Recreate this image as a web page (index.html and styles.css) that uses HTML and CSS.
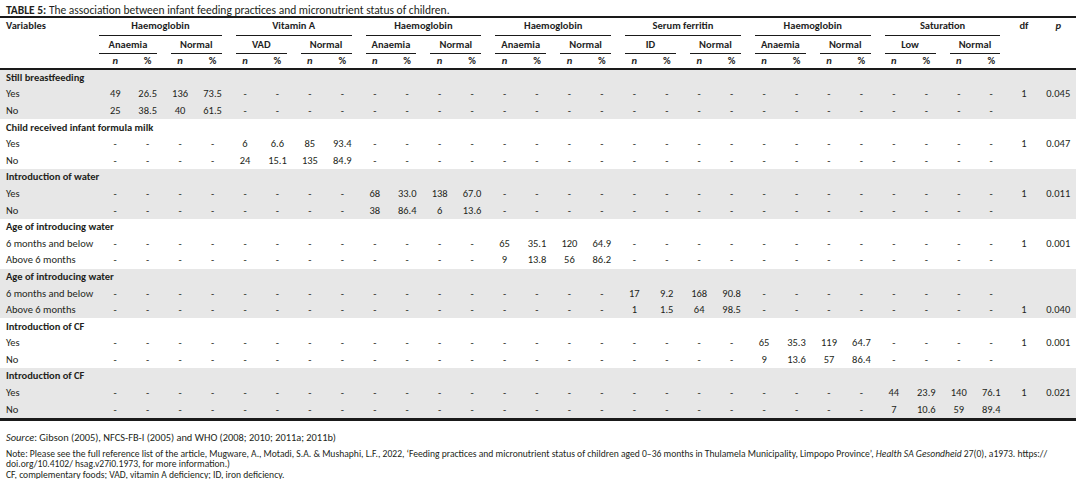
FILE: index.html
```html
<!DOCTYPE html>
<html lang="en">
<head>
<meta charset="utf-8">
<title>Table 5</title>
<link rel="stylesheet" href="styles.css">
</head>
<body>
<div class="caption"><b>TABLE 5:</b> The association between infant feeding practices and micronutrient status of children.</div>
<table class="tbl">
<colgroup>
<col class="c-var">
<col class="c-d"><col class="c-d"><col class="c-d"><col class="c-d"><col class="c-d"><col class="c-d"><col class="c-d">
<col class="c-d"><col class="c-d"><col class="c-d"><col class="c-d"><col class="c-d"><col class="c-d"><col class="c-d">
<col class="c-d"><col class="c-d"><col class="c-d"><col class="c-d"><col class="c-d"><col class="c-d"><col class="c-d">
<col class="c-d"><col class="c-d"><col class="c-d"><col class="c-d"><col class="c-d"><col class="c-d"><col class="c-d">
<col class="c-df"><col class="c-p">
</colgroup>
<thead>
<tr class="h1">
<th rowspan="3" class="h-var">Variables</th>
<th colspan="4"><span class="grp first">Haemoglobin</span></th>
<th colspan="4"><span class="grp">Vitamin A</span></th>
<th colspan="4"><span class="grp">Haemoglobin</span></th>
<th colspan="4"><span class="grp">Haemoglobin</span></th>
<th colspan="4"><span class="grp">Serum ferritin</span></th>
<th colspan="4"><span class="grp">Haemoglobin</span></th>
<th colspan="4"><span class="grp">Saturation</span></th>
<th rowspan="3" class="h-top">df</th>
<th rowspan="3" class="h-top"><i>p</i></th>
</tr>
<tr class="h2">
<th colspan="2"><span class="grp first">Anaemia</span></th><th colspan="2"><span class="grp">Normal</span></th>
<th colspan="2"><span class="grp">VAD</span></th><th colspan="2"><span class="grp">Normal</span></th>
<th colspan="2"><span class="grp">Anaemia</span></th><th colspan="2"><span class="grp">Normal</span></th>
<th colspan="2"><span class="grp">Anaemia</span></th><th colspan="2"><span class="grp">Normal</span></th>
<th colspan="2"><span class="grp">ID</span></th><th colspan="2"><span class="grp">Normal</span></th>
<th colspan="2"><span class="grp">Anaemia</span></th><th colspan="2"><span class="grp">Normal</span></th>
<th colspan="2"><span class="grp">Low</span></th><th colspan="2"><span class="grp">Normal</span></th>
</tr>
<tr class="h3">
<th><i>n</i></th><th>%</th><th><i>n</i></th><th>%</th><th><i>n</i></th><th>%</th><th><i>n</i></th><th>%</th>
<th><i>n</i></th><th>%</th><th><i>n</i></th><th>%</th><th><i>n</i></th><th>%</th><th><i>n</i></th><th>%</th>
<th><i>n</i></th><th>%</th><th><i>n</i></th><th>%</th><th><i>n</i></th><th>%</th><th><i>n</i></th><th>%</th>
<th><i>n</i></th><th>%</th><th><i>n</i></th><th>%</th>
</tr>
</thead>

<tbody class="sec shade">
<tr><td colspan="31" class="sec-title">Still breastfeeding</td></tr>
<tr><td class="lbl">Yes</td>
<td>49</td><td>26.5</td><td>136</td><td>73.5</td>
<td>-</td><td>-</td><td>-</td><td>-</td><td>-</td><td>-</td><td>-</td><td>-</td>
<td>-</td><td>-</td><td>-</td><td>-</td><td>-</td><td>-</td><td>-</td><td>-</td>
<td>-</td><td>-</td><td>-</td><td>-</td><td>-</td><td>-</td><td>-</td><td>-</td>
<td>1</td><td>0.045</td></tr>
<tr><td class="lbl">No</td>
<td>25</td><td>38.5</td><td>40</td><td>61.5</td>
<td>-</td><td>-</td><td>-</td><td>-</td><td>-</td><td>-</td><td>-</td><td>-</td>
<td>-</td><td>-</td><td>-</td><td>-</td><td>-</td><td>-</td><td>-</td><td>-</td>
<td>-</td><td>-</td><td>-</td><td>-</td><td>-</td><td>-</td><td>-</td><td>-</td>
<td></td><td></td></tr>
</tbody>

<tbody class="sec">
<tr><td colspan="31" class="sec-title">Child received infant formula milk</td></tr>
<tr><td class="lbl">Yes</td>
<td>-</td><td>-</td><td>-</td><td>-</td>
<td>6</td><td>6.6</td><td>85</td><td>93.4</td>
<td>-</td><td>-</td><td>-</td><td>-</td><td>-</td><td>-</td><td>-</td><td>-</td>
<td>-</td><td>-</td><td>-</td><td>-</td><td>-</td><td>-</td><td>-</td><td>-</td>
<td>-</td><td>-</td><td>-</td><td>-</td>
<td>1</td><td>0.047</td></tr>
<tr><td class="lbl">No</td>
<td>-</td><td>-</td><td>-</td><td>-</td>
<td>24</td><td>15.1</td><td>135</td><td>84.9</td>
<td>-</td><td>-</td><td>-</td><td>-</td><td>-</td><td>-</td><td>-</td><td>-</td>
<td>-</td><td>-</td><td>-</td><td>-</td><td>-</td><td>-</td><td>-</td><td>-</td>
<td>-</td><td>-</td><td>-</td><td>-</td>
<td></td><td></td></tr>
</tbody>

<tbody class="sec shade">
<tr><td colspan="31" class="sec-title">Introduction of water</td></tr>
<tr><td class="lbl">Yes</td>
<td>-</td><td>-</td><td>-</td><td>-</td><td>-</td><td>-</td><td>-</td><td>-</td>
<td>68</td><td>33.0</td><td>138</td><td>67.0</td>
<td>-</td><td>-</td><td>-</td><td>-</td><td>-</td><td>-</td><td>-</td><td>-</td>
<td>-</td><td>-</td><td>-</td><td>-</td><td>-</td><td>-</td><td>-</td><td>-</td>
<td>1</td><td>0.011</td></tr>
<tr><td class="lbl">No</td>
<td>-</td><td>-</td><td>-</td><td>-</td><td>-</td><td>-</td><td>-</td><td>-</td>
<td>38</td><td>86.4</td><td>6</td><td>13.6</td>
<td>-</td><td>-</td><td>-</td><td>-</td><td>-</td><td>-</td><td>-</td><td>-</td>
<td>-</td><td>-</td><td>-</td><td>-</td><td>-</td><td>-</td><td>-</td><td>-</td>
<td></td><td></td></tr>
</tbody>

<tbody class="sec">
<tr><td colspan="31" class="sec-title">Age of introducing water</td></tr>
<tr><td class="lbl">6 months and below</td>
<td>-</td><td>-</td><td>-</td><td>-</td><td>-</td><td>-</td><td>-</td><td>-</td>
<td>-</td><td>-</td><td>-</td><td>-</td>
<td>65</td><td>35.1</td><td>120</td><td>64.9</td>
<td>-</td><td>-</td><td>-</td><td>-</td><td>-</td><td>-</td><td>-</td><td>-</td>
<td>-</td><td>-</td><td>-</td><td>-</td>
<td>1</td><td>0.001</td></tr>
<tr><td class="lbl">Above 6 months</td>
<td>-</td><td>-</td><td>-</td><td>-</td><td>-</td><td>-</td><td>-</td><td>-</td>
<td>-</td><td>-</td><td>-</td><td>-</td>
<td>9</td><td>13.8</td><td>56</td><td>86.2</td>
<td>-</td><td>-</td><td>-</td><td>-</td><td>-</td><td>-</td><td>-</td><td>-</td>
<td>-</td><td>-</td><td>-</td><td>-</td>
<td></td><td></td></tr>
</tbody>

<tbody class="sec shade">
<tr><td colspan="31" class="sec-title">Age of introducing water</td></tr>
<tr><td class="lbl">6 months and below</td>
<td>-</td><td>-</td><td>-</td><td>-</td><td>-</td><td>-</td><td>-</td><td>-</td>
<td>-</td><td>-</td><td>-</td><td>-</td><td>-</td><td>-</td><td>-</td><td>-</td>
<td>17</td><td>9.2</td><td>168</td><td>90.8</td>
<td>-</td><td>-</td><td>-</td><td>-</td><td>-</td><td>-</td><td>-</td><td>-</td>
<td></td><td></td></tr>
<tr><td class="lbl">Above 6 months</td>
<td>-</td><td>-</td><td>-</td><td>-</td><td>-</td><td>-</td><td>-</td><td>-</td>
<td>-</td><td>-</td><td>-</td><td>-</td><td>-</td><td>-</td><td>-</td><td>-</td>
<td>1</td><td>1.5</td><td>64</td><td>98.5</td>
<td>-</td><td>-</td><td>-</td><td>-</td><td>-</td><td>-</td><td>-</td><td>-</td>
<td>1</td><td>0.040</td></tr>
</tbody>

<tbody class="sec">
<tr><td colspan="31" class="sec-title">Introduction of CF</td></tr>
<tr><td class="lbl">Yes</td>
<td>-</td><td>-</td><td>-</td><td>-</td><td>-</td><td>-</td><td>-</td><td>-</td>
<td>-</td><td>-</td><td>-</td><td>-</td><td>-</td><td>-</td><td>-</td><td>-</td>
<td>-</td><td>-</td><td>-</td><td>-</td>
<td>65</td><td>35.3</td><td>119</td><td>64.7</td>
<td>-</td><td>-</td><td>-</td><td>-</td>
<td>1</td><td>0.001</td></tr>
<tr><td class="lbl">No</td>
<td>-</td><td>-</td><td>-</td><td>-</td><td>-</td><td>-</td><td>-</td><td>-</td>
<td>-</td><td>-</td><td>-</td><td>-</td><td>-</td><td>-</td><td>-</td><td>-</td>
<td>-</td><td>-</td><td>-</td><td>-</td>
<td>9</td><td>13.6</td><td>57</td><td>86.4</td>
<td>-</td><td>-</td><td>-</td><td>-</td>
<td></td><td></td></tr>
</tbody>

<tbody class="sec shade">
<tr><td colspan="31" class="sec-title">Introduction of CF</td></tr>
<tr><td class="lbl">Yes</td>
<td>-</td><td>-</td><td>-</td><td>-</td><td>-</td><td>-</td><td>-</td><td>-</td>
<td>-</td><td>-</td><td>-</td><td>-</td><td>-</td><td>-</td><td>-</td><td>-</td>
<td>-</td><td>-</td><td>-</td><td>-</td><td>-</td><td>-</td><td>-</td><td>-</td>
<td>44</td><td>23.9</td><td>140</td><td>76.1</td>
<td>1</td><td>0.021</td></tr>
<tr><td class="lbl">No</td>
<td>-</td><td>-</td><td>-</td><td>-</td><td>-</td><td>-</td><td>-</td><td>-</td>
<td>-</td><td>-</td><td>-</td><td>-</td><td>-</td><td>-</td><td>-</td><td>-</td>
<td>-</td><td>-</td><td>-</td><td>-</td><td>-</td><td>-</td><td>-</td><td>-</td>
<td>7</td><td>10.6</td><td>59</td><td>89.4</td>
<td></td><td></td></tr>
</tbody>
</table>

<div class="notes">
<p class="src"><i>Source</i>: Gibson (2005), NFCS-FB-I (2005) and WHO (2008; 2010; 2011a; 2011b)</p>
<p class="note">Note: Please see the full reference list of the article, Mugware, A., Motadi, S.A. &amp; Mushaphi, L.F., 2022, ‘Feeding practices and micronutrient status of children aged 0–36 months in Thulamela Municipality, Limpopo Province’, <i>Health SA Gesondheid</i> 27(0), a1973. https://<br>doi.org/10.4102/ hsag.v27i0.1973, for more information.)</p>
<p class="abbr">CF, complementary foods; VAD, vitamin A deficiency; ID, iron deficiency.</p>
</div>
</body>
</html>
```

FILE: styles.css
```css
html, body {
  margin: 0;
  padding: 0;
  background: #ffffff;
}

body {
  width: 1076px;
  font-family: Carlito, Lato, "Open Sans", sans-serif;
  color: #231f20;
}

.caption {
  font-size: 11.5px;
  line-height: 11px;
  height: 11px;
  padding: 5px 6px 0;
  border-bottom: 2.5px solid #1a1a1a;
  white-space: nowrap;
}

.caption b {
  font-weight: 700;
}

.tbl {
  width: 1076px;
  table-layout: fixed;
  border-collapse: collapse;
  font-size: 10.5px;
}

.c-var { width: 99px; }
.c-d { width: 32.44px; }
.c-df { width: 33px; }
.c-p { width: 35.7px; }

.tbl thead {
  border-bottom: 2px solid #1a1a1a;
}

.tbl th {
  font-weight: 700;
  padding: 0;
  text-align: center;
  vertical-align: top;
  color: #1f1f1f;
}

.h1 th {
  height: 17.5px;
  line-height: 16.5px;
}

.h2 th {
  height: 18px;
  line-height: 17px;
}

.h3 th {
  height: 14px;
  line-height: 14px;
}

.h-var {
  text-align: left !important;
  padding-left: 6px !important;
}

.grp {
  display: block;
  margin: 0 7px;
  border-bottom: 1px solid #1a1a1a;
}

.grp.first {
  margin-left: 0;
}

.tbl td {
  padding: 0;
  height: 16.6px;
  line-height: 16px;
  text-align: center;
  white-space: nowrap;
  vertical-align: middle;
}

.sec.shade {
  background: #e7e7e7;
}

.tbl td.sec-title {
  text-align: left;
  padding-left: 6px;
  font-weight: 700;
}

.tbl td.lbl {
  text-align: left;
  padding-left: 6px;
}

.notes {
  border-top: 3px solid #1a1a1a;
  padding: 11px 6px 0;
  font-size: 9.6px;
  color: #231f20;
}

.notes p {
  margin: 0;
  white-space: nowrap;
}

.src {
  font-size: 10.4px;
  line-height: 12px;
}

.note {
  margin-top: 5px !important;
  line-height: 10px;
}

.abbr {
  margin-top: 1px !important;
  line-height: 10px;
}
```
